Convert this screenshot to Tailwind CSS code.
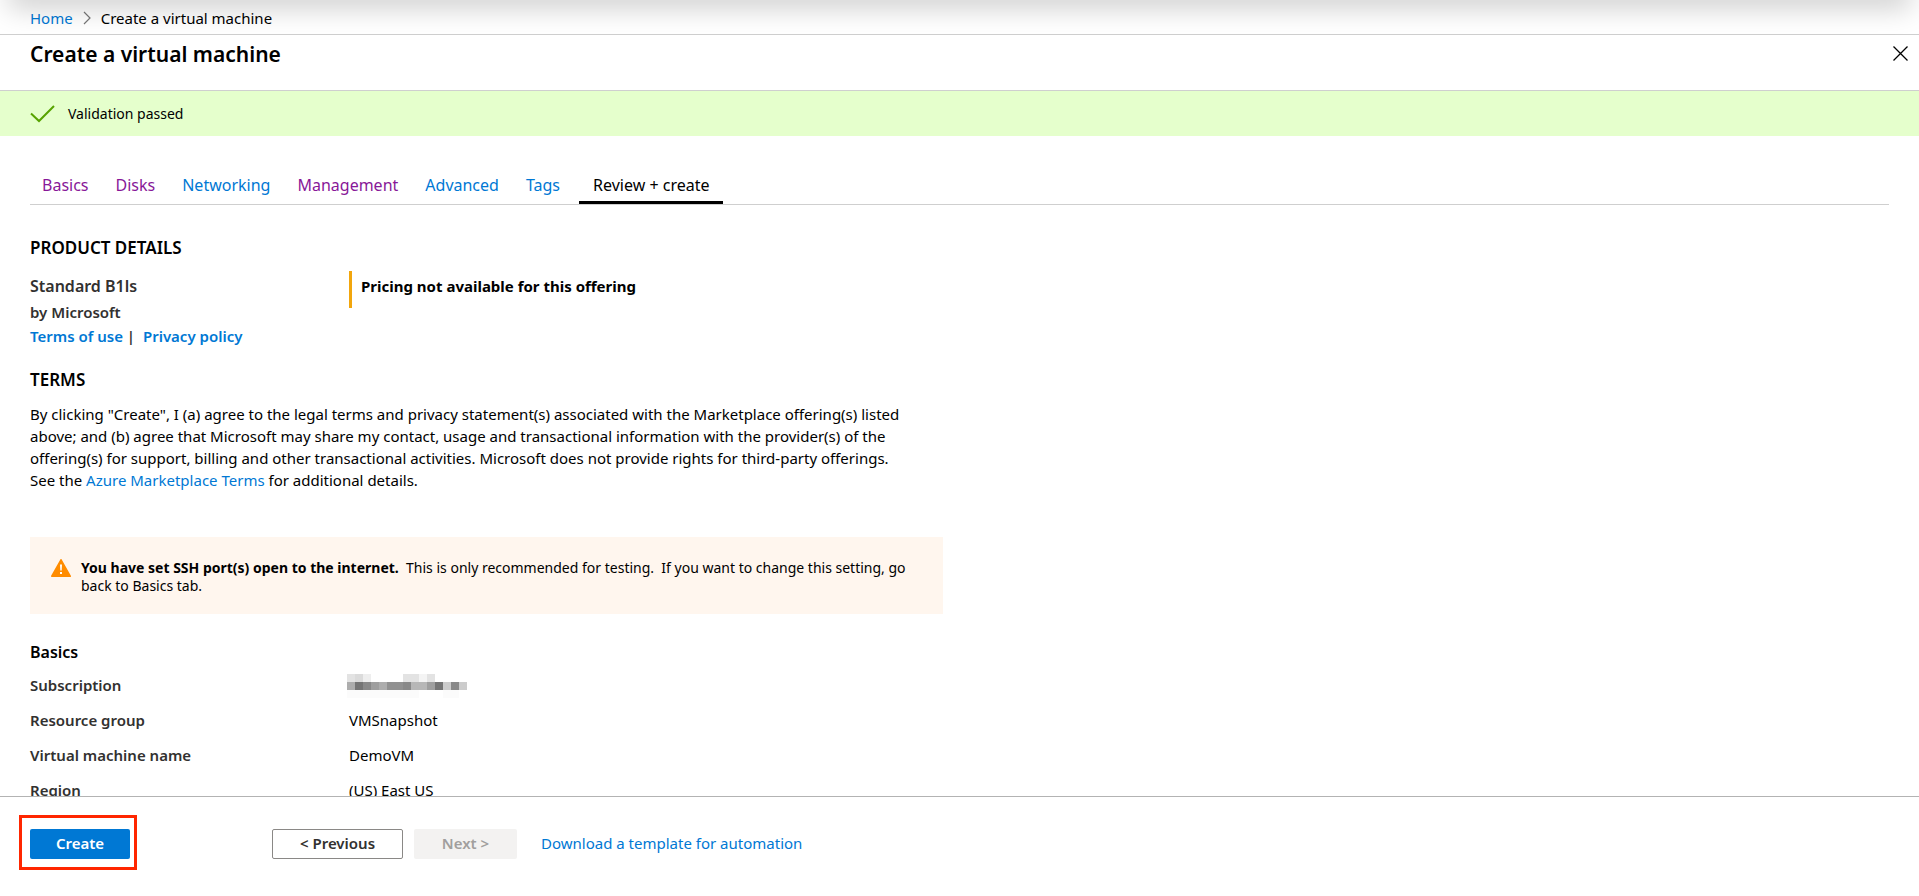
<!DOCTYPE html>
<html lang="en">
<head>
<meta charset="utf-8">
<meta name="viewport" content="width=device-width, initial-scale=1">
<title>Create a virtual machine</title>
<script src="https://cdn.jsdelivr.net/npm/@tailwindcss/browser@4"></script>
</head>
<body class="relative flex h-screen flex-col overflow-hidden bg-white font-['Noto_Sans','Open_Sans',sans-serif] text-[15px] leading-[22px] text-black">
  <!-- Shadow cast by the portal bar above the page -->
  <div class="pointer-events-none absolute inset-x-3 -top-5 h-5 shadow-[0_4px_28px_4px_rgba(0,0,0,0.2)]"></div>

  <nav aria-label="Breadcrumb" class="flex h-[35px] shrink-0 items-center gap-[10px] border-b border-[#cfcfcf] px-[30px] pt-[2px]">
    <a href="#" class="text-[#0078d4]">Home</a>
    <svg class="h-[14px] w-2" viewBox="0 0 8 14" fill="none" stroke="#777" stroke-width="1.2" aria-hidden="true"><path d="M1 1l6 6-6 6"/></svg>
    <span>Create a virtual machine</span>
  </nav>

  <header class="flex h-[56px] shrink-0 items-start justify-between border-b border-[#cfcfcf] pt-[5px] pr-[10px] pl-[30px]">
    <h1 class="text-[21px] leading-7 font-semibold">Create a virtual machine</h1>
    <button type="button" aria-label="Close" class="mt-[5px] flex size-[17px] items-center justify-center">
      <svg class="size-[17px]" viewBox="0 0 17 17" fill="none" stroke="#000" stroke-width="1.3" aria-hidden="true"><path d="M1.500 1.500l14 14M15.500 1.500l-14 14"/></svg>
    </button>
  </header>

  <div role="status" class="flex h-[45px] shrink-0 items-center gap-[13px] bg-[#e5ffcc] px-[30px] text-[14px]">
    <svg class="h-[18px] w-[25px]" viewBox="0 0 25 18" fill="none" stroke="#57a300" stroke-width="2" aria-hidden="true"><path d="M1 8.500l8 7.500L24 1"/></svg>
    <span>Validation passed</span>
  </div>

  <main class="min-h-0 flex-1 overflow-hidden px-[30px] pt-[30px]">
    <div role="tablist" class="flex gap-[3px] border-b border-[#cfcfcf] text-[16px]">
      <button role="tab" type="button" class="h-[38px] px-3 text-[#881798]">Basics</button>
      <button role="tab" type="button" class="h-[38px] px-3 text-[#881798]">Disks</button>
      <button role="tab" type="button" class="h-[38px] px-3 text-[#0078d4]">Networking</button>
      <button role="tab" type="button" class="h-[38px] px-3 text-[#881798]">Management</button>
      <button role="tab" type="button" class="h-[38px] px-3 text-[#0078d4]">Advanced</button>
      <button role="tab" type="button" class="h-[38px] px-3 text-[#0078d4]">Tags</button>
      <button role="tab" type="button" aria-selected="true" class="ml-1 h-[38px] border-b-[3px] border-black px-[14px] pt-[3px]">Review + create</button>
    </div>

    <h2 class="mt-8 text-[17px] font-semibold">PRODUCT DETAILS</h2>
    <div class="mt-3 flex">
      <div class="w-[319px] font-semibold text-[#323130]">
        <p class="h-[26px] text-[16px] leading-[30px]">Standard B1ls</p>
        <p class="h-[26px] leading-[30px]">by Microsoft</p>
        <p class="leading-[26px]"><a href="#" class="text-[#0078d4]">Terms of use</a> |&nbsp; <a href="#" class="text-[#0078d4]">Privacy policy</a></p>
      </div>
      <p class="h-[37px] border-l-[3px] border-[#f2a60d] pl-[9px] leading-[30px] font-bold">Pricing not available for this offering</p>
    </div>

    <h2 class="mt-5 text-[17px] font-semibold">TERMS</h2>
    <p class="mt-3 w-[913px]">By clicking "Create", I (a) agree to the legal terms and privacy statement(s) associated with the Marketplace offering(s) listed<br>above; and (b) agree that Microsoft may share my contact, usage and transactional information with the provider(s) of the<br>offering(s) for support, billing and other transactional activities. Microsoft does not provide rights for third-party offerings.<br>See the <a href="#" class="text-[#0078d4]">Azure Marketplace Terms</a> for additional details.</p>

    <div role="alert" class="mt-[46px] flex h-[77px] w-[913px] gap-[10px] bg-[#fff6ee] pt-[22px] pl-[21px] text-[14px] leading-[18px]">
      <svg class="h-[18px] w-5 shrink-0" viewBox="0 0 20 18" aria-hidden="true"><path d="M10 .8L19.200 17.200H.8z" fill="#ff8c00" stroke="#ff8c00" stroke-width="1.600" stroke-linejoin="round"/><path d="M9 5.500h2l-.3 6H9.300zM9 13h2v2H9z" fill="#fff"/></svg>
      <p><strong class="font-bold">You have set SSH port(s) open to the internet.</strong>&nbsp; This is only recommended for testing.&nbsp; If you want to change this setting, go<br>back to Basics tab.</p>
    </div>

    <h2 class="mt-[27px] text-[16px] font-semibold">Basics</h2>
    <dl class="mt-[5px] grid grid-cols-[319px_1fr] leading-[35px]">
      <dt class="font-semibold text-[#323130]">Subscription</dt>
      <dd class="flex items-center">
        <svg class="-ml-[2px] h-6 w-[120px]" viewBox="0 0 120 24" shape-rendering="crispEdges" role="img" aria-label="Hidden subscription name">
          <path fill="#e3e3e3" d="M0 0h8v8H0zM56 0h8v8h-8zM64 0h8v8h-8zM80 0h8v8h-8z"/><path fill="#dbdbdb" d="M8 0h8v8H8z"/><path fill="#eee" d="M16 0h8v8h-8z"/><path fill="#f4f4f4" d="M72 0h8v8h-8z"/>
          <path fill="#adadad" d="M0 8h8v8H0zM32 8h8v8h-8z"/><path fill="#757575" d="M8 8h8v8H8zM88 8h8v8h-8z"/><path fill="#898989" d="M16 8h8v8h-8zM56 8h8v8h-8zM104 8h8v8h-8z"/><path fill="#9f9f9f" d="M24 8h8v8h-8zM80 8h8v8h-8z"/><path fill="#919191" d="M40 8h16v8H40z"/><path fill="#b7b7b7" d="M64 8h16v8H64z"/><path fill="#ccc" d="M96 8h8v8h-8zM112 8h8v8h-8z"/>
          <path fill="#fbfbfb" d="M0 16h72v8H0zM96 16h16v8H96z"/>
        </svg>
      </dd>
      <dt class="font-semibold text-[#323130]">Resource group</dt><dd>VMSnapshot</dd>
      <dt class="font-semibold text-[#323130]">Virtual machine name</dt><dd>DemoVM</dd>
      <dt class="font-semibold text-[#323130]">Region</dt><dd>(US) East US</dd>
    </dl>
  </main>

  <footer class="flex h-[100px] shrink-0 items-start border-t border-[#b3b3b3] pt-[18px] pl-[19px]">
    <div class="border-[3px] border-[#ff2600] pt-[11px] pr-1 pb-2 pl-2">
      <button type="button" class="block h-[30px] w-[100px] rounded-[2px] bg-[#0078d4] pb-[2px] font-semibold text-white">Create</button>
    </div>
    <div class="mt-[14px] ml-[135px] flex items-center">
      <button type="button" class="h-[30px] w-[131px] rounded-[2px] border border-[#8a8886] pb-[2px] font-semibold text-[#323130]">&lt; Previous</button>
      <button type="button" disabled class="ml-[11px] h-[30px] w-[103px] rounded-[2px] bg-[#f3f2f1] pb-[2px] font-semibold text-[#a19f9d]">Next &gt;</button>
      <a href="#" class="ml-6 pb-[2px] text-[#0078d4]">Download a template for automation</a>
    </div>
  </footer>
</body>
</html>
